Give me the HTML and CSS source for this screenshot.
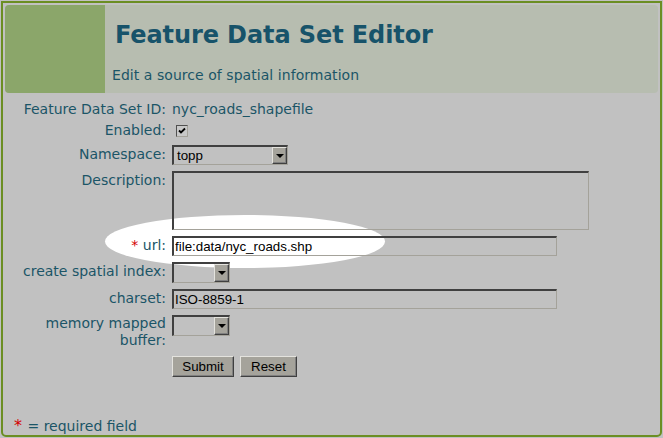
FILE: index.html
```html
<!DOCTYPE html>
<html>
<head>
<meta charset="utf-8">
<title>Feature Data Set Editor</title>
<link rel="stylesheet" href="styles.css">
</head>
<body>
<div class="page">
  <div class="highlight"></div>
  <header class="header">
    <div class="header-logo"></div>
    <div class="header-text">
      <h1 class="title">Feature Data Set Editor</h1>
      <p class="subtitle">Edit a source of spatial information</p>
    </div>
  </header>
  <form class="form">
    <div class="label row-id">Feature Data Set ID:</div>
    <div class="value row-id">nyc_roads_shapefile</div>

    <div class="label row-enabled">Enabled:</div>
    <div class="value row-enabled">
      <span class="checkbox"><svg width="8" height="8" viewBox="0 0 8 8"><path d="M1 3.5 L3 5.5 L7 1.5" fill="none" stroke="#000" stroke-width="1.8"/></svg></span>
    </div>

    <div class="label">Namespace:</div>
    <div class="value">
      <div class="select select-ns"><span class="select-text">topp</span><span class="select-btn"><span class="arrow"></span></span></div>
    </div>

    <div class="label">Description:</div>
    <div class="value"><textarea class="textarea"></textarea></div>

    <div class="label"><span class="req">*</span> url:</div>
    <div class="value"><input class="text-input input-url" type="text" value="file:data/nyc_roads.shp"></div>

    <div class="label">create spatial index:</div>
    <div class="value">
      <div class="select select-small select-csi"><span class="select-text"></span><span class="select-btn"><span class="arrow"></span></span></div>
    </div>

    <div class="label">charset:</div>
    <div class="value"><input class="text-input input-charset" type="text" value="ISO-8859-1"></div>

    <div class="label label-two">memory mapped<br>buffer:</div>
    <div class="value">
      <div class="select select-small"><span class="select-text"></span><span class="select-btn"><span class="arrow"></span></span></div>
    </div>

    <div class="label"></div>
    <div class="value buttons">
      <button type="button" class="btn btn-submit">Submit</button>
      <button type="button" class="btn btn-reset">Reset</button>
    </div>
  </form>
  <p class="footnote"><span class="req req-big">*</span> = required field</p>
</div>
</body>
</html>
```

FILE: styles.css
```css
* { box-sizing: border-box; }
html, body { margin: 0; padding: 0; }
body {
  background: #c1c1c1;
  font-family: "DejaVu Sans", Verdana, sans-serif;
  font-size: 14px;
  color: #1b5567;
  width: 663px;
  height: 438px;
  overflow: hidden;
}
.page {
  position: relative;
  margin: 1px 0 0 1px;
  width: 661px;
  height: 436px;
  border: 2px solid #6b8e23;
  border-radius: 0 0 5px 5px;
  display: flex;
  flex-direction: column;
}
.highlight {
  position: absolute;
  left: 102px;
  top: 212px;
  width: 280px;
  height: 53px;
  background: #fff;
  border-radius: 50%;
  z-index: 0;
}
.header {
  margin: 2px;
  height: 88px;
  display: flex;
  background: #b7bdb0;
  border-radius: 4px;
  overflow: hidden;
  flex-shrink: 0;
}
.header-logo { width: 100px; background: #8ba66a; }
.header-text { padding: 16px 0 0 10px; }
.title {
  margin: 0;
  font-size: 24px;
  line-height: 28px;
  font-weight: bold;
  color: #17536a;
  letter-spacing: -0.1px;
}
.subtitle {
  margin: 17px 0 0 -3px;
  line-height: 18px;
  color: #1b5567;
  letter-spacing: 0.05px;
}
.form {
  position: relative;
  z-index: 1;
  margin-top: 2px;
  display: grid;
  grid-template-columns: 163px 1fr;
  column-gap: 6px;
  row-gap: 6px;
  align-items: start;
}
.label { text-align: right; line-height: 18px; white-space: nowrap; }
.label-two { line-height: 17px; }
.value { line-height: 18px; }
.row-id { padding-top: 3px; }
.row-enabled { height: 15px; line-height: 13px; }
.req { color: #d40000; }
.req-big { font-size: 16px; margin-right: 1px; }
.checkbox {
  display: flex;
  align-items: center;
  justify-content: center;
  width: 12px;
  height: 12px;
  margin: 1px 0 0 4px;
  background: #c8c8c8;
  border-top: 1px solid #505050;
  border-left: 1px solid #505050;
  border-right: 1px solid #a4a29a;
  border-bottom: 1px solid #a4a29a;
}
.select {
  display: flex;
  height: 20px;
  width: 116px;
  border-top: 2px solid #404040;
  border-left: 2px solid #404040;
  border-right: 1px solid #a4a29a;
  border-bottom: 1px solid #a4a29a;
  font-family: "Liberation Sans", Arial, sans-serif;
  font-size: 13.33px;
  color: #000;
}
.select-small { width: 58px; height: 21px; }
.select-text { flex: 1; padding-left: 3px; line-height: 17px; }
.select-btn {
  width: 15px;
  background: #a5a39b;
  border-top: 1px solid #e4e3de;
  border-left: 1px solid #e4e3de;
  border-right: 1px solid #404040;
  border-bottom: 1px solid #404040;
  box-shadow: inset -1px -1px 0 #808080;
  display: flex;
  align-items: center;
  justify-content: center;
}
.arrow {
  width: 0;
  height: 0;
  border-left: 4px solid transparent;
  border-right: 4px solid transparent;
  border-top: 4px solid #000;
}
.textarea {
  display: block;
  width: 417px;
  height: 59px;
  margin: 0;
  background: transparent;
  border-top: 2px solid #404040;
  border-left: 2px solid #404040;
  border-right: 1px solid #a4a29a;
  border-bottom: 1px solid #a4a29a;
  resize: none;
  outline: none;
}
.text-input {
  display: block;
  width: 385px;
  height: 20px;
  margin: 0;
  padding: 0 0 0 1px;
  background: transparent;
  border-top: 2px solid #404040;
  border-left: 2px solid #404040;
  border-right: 1px solid #a4a29a;
  border-bottom: 1px solid #a4a29a;
  font-family: "Liberation Sans", Arial, sans-serif;
  font-size: 13.33px;
  color: #000;
  outline: none;
}
.buttons { display: flex; gap: 6px; padding-top: 1px; }
.btn {
  height: 21px;
  margin: 0;
  padding: 0;
  background: #a5a39b;
  border-top: 1px solid #e4e3de;
  border-left: 1px solid #e4e3de;
  border-right: 1px solid #404040;
  border-bottom: 1px solid #404040;
  box-shadow: inset -1px -1px 0 #808080;
  font-family: "Liberation Sans", Arial, sans-serif;
  font-size: 13.33px;
  color: #000;
}
.btn-submit { width: 62px; }
.btn-reset { width: 57px; }
.footnote {
  margin: auto 0 0 0;
  padding-left: 11px;
  line-height: 18px;
}
```
